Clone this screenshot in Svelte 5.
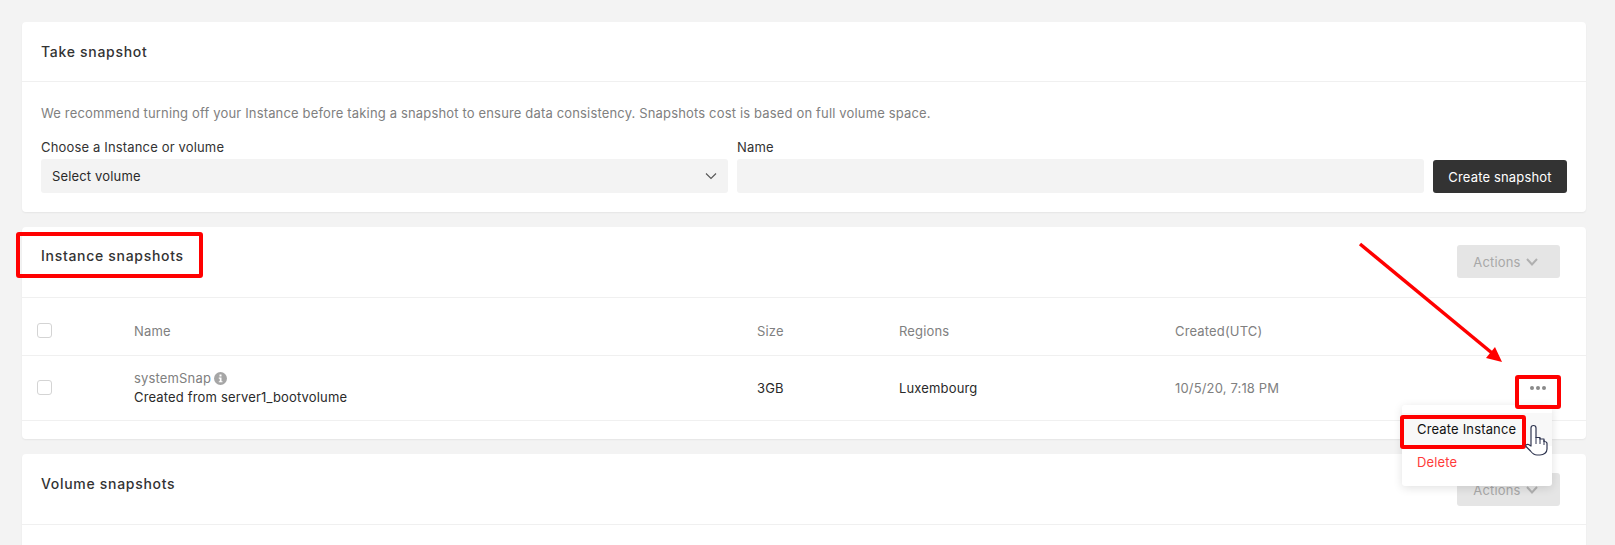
<script>
    const columns = ['Name', 'Size', 'Regions', 'Created(UTC)'];
</script>

<style>
    :global(body) {
        background: #f3f3f3;
    }

    .page {
        position: relative;
        height: 545px;
        overflow: hidden;
        padding: 22px 29px 0 22px;
        box-sizing: border-box;
        font-family: Inter, "Liberation Sans", sans-serif;
        font-size: 13px;
        letter-spacing: 0.16px;
        color: #2a2a2a;
    }

    .card {
        background: #fff;
        border-radius: 4px;
        box-shadow: 0 1px 2px rgba(0, 0, 0, 0.06);
        margin-bottom: 15px;
    }

    .card-head {
        display: flex;
        align-items: flex-start;
        justify-content: space-between;
        border-bottom: 1px solid #f0f0f0;
        padding: 18px 26px 0 19px;
        height: 52px;
    }

    .card-head.short {
        align-items: center;
        padding-top: 0;
        height: 59px;
    }

    .card-head.volume {
        padding-top: 19px;
        height: 51px;
    }

    h2 {
        margin: 0;
        font-size: 14px;
        line-height: 20px;
        font-weight: 500;
        letter-spacing: 0.7px;
        color: #333;
    }

    .card-head:not(.short) h2 {
        margin-top: 1px;
    }

    .actions {
        width: 103px;
        height: 33px;
        border: 0;
        border-radius: 3px;
        background: #e5e5e5;
        color: #a8a8a8;
        font: inherit;
        letter-spacing: inherit;
        display: flex;
        align-items: center;
        justify-content: center;
        gap: 5px;
        padding: 0 6px 0 0;
    }

    .snapshot-form {
        padding: 23px 19px 19px;
    }

    .hint {
        margin: 0 0 18px;
        line-height: 16px;
        color: #808080;
    }

    .fields {
        display: grid;
        grid-template-columns: 687px 687px 134px;
        column-gap: 9px;
        align-items: end;
    }

    label {
        display: block;
        line-height: 16px;
        margin-bottom: 4px;
        color: #333;
    }

    .select,
    .text-input {
        height: 34px;
        background: #f3f3f3;
        border-radius: 3px;
    }

    .select {
        display: flex;
        align-items: center;
        justify-content: space-between;
        padding: 0 11px;
    }

    .create {
        height: 33px;
        border: 0;
        border-radius: 3px;
        background: #333;
        color: #fff;
        font: inherit;
        letter-spacing: inherit;
        padding: 0;
    }

    .row {
        display: grid;
        grid-template-columns: 112px 623px 142px 276px 1fr;
        align-items: center;
        border-bottom: 1px solid #f0f0f0;
    }

    .row.top {
        height: 49px;
        padding-top: 8px;
        color: #808080;
    }

    .row.item {
        height: 64px;
    }

    .check {
        width: 13px;
        height: 13px;
        margin-left: 15px;
        border: 1px solid #d4d4d4;
        border-radius: 3px;
    }

    .row.item .check {
        margin-top: -1px;
    }

    .snap-name {
        display: flex;
        align-items: center;
        gap: 3px;
        line-height: 18px;
        color: #808080;
        margin-top: -1px;
    }

    .snap-from {
        line-height: 18px;
        margin-top: 1px;
    }

    .date {
        color: #808080;
    }

    .row-end {
        height: 18px;
    }

    .row-end.tall {
        height: 60px;
    }

    .dots {
        position: absolute;
        left: 1530px;
        top: 386px;
        display: flex;
        gap: 2px;
    }

    .dots span {
        width: 4px;
        height: 4px;
        border-radius: 50%;
        background: #8a8a8a;
    }

    .menu {
        position: absolute;
        left: 1402px;
        top: 405px;
        width: 150px;
        height: 81px;
        padding-top: 8px;
        box-sizing: border-box;
        background: #fff;
        border-radius: 3px;
        box-shadow: 0 2px 10px rgba(0, 0, 0, 0.12);
    }

    .menu div {
        height: 33px;
        line-height: 33px;
        padding-left: 15px;
    }

    .menu .hover {
        background: #f8f8f8;
        color: #111;
    }

    .menu .danger {
        color: #ff3b3b;
    }

    .overlay {
        position: absolute;
        left: 0;
        top: 0;
    }
</style>

<div class="page">
    <section class="card">
        <div class="card-head short"><h2>Take snapshot</h2></div>
        <div class="snapshot-form">
            <p class="hint">We recommend turning off your Instance before taking a snapshot to ensure data consistency. Snapshots cost is based on full volume space.</p>
            <div class="fields">
                <div>
                    <label for="volume">Choose a Instance or volume</label>
                    <div class="select" id="volume">
                        Select volume
                        <svg width="12" height="8" viewBox="0 0 12 8"><path d="M1 1.5l5 5 5-5" fill="none" stroke="#555" stroke-width="1.1"/></svg>
                    </div>
                </div>
                <div>
                    <label for="snapname">Name</label>
                    <div class="text-input" id="snapname"></div>
                </div>
                <button class="create">Create snapshot</button>
            </div>
        </div>
    </section>

    <section class="card">
        <div class="card-head">
            <h2>Instance snapshots</h2>
            <button class="actions">Actions
                <svg width="12" height="8" viewBox="0 0 12 8"><path d="M1 1l5 5.5L11 1" fill="none" stroke="#b0b0b0" stroke-width="2"/></svg>
            </button>
        </div>
        <div class="row top">
            <div class="check"></div>
            {#each columns as col}
                <div>{col}</div>
            {/each}
        </div>
        <div class="row item">
            <div class="check"></div>
            <div>
                <div class="snap-name">systemSnap
                    <svg width="13" height="13" viewBox="0 0 13 13"><circle cx="6.5" cy="6.5" r="6.5" fill="#a6a6a6"/><rect x="5.5" y="2.5" width="2" height="2" fill="#fff"/><path d="M4.8 5.6h2.7v3.6h1v1.1h-3.7V9.2h1V6.7h-1z" fill="#fff"/></svg>
                </div>
                <div class="snap-from">Created from server1_bootvolume</div>
            </div>
            <div>3GB</div>
            <div>Luxembourg</div>
            <div class="date">10/5/20, 7:18 PM</div>
        </div>
        <div class="row-end"></div>
    </section>

    <section class="card">
        <div class="card-head volume">
            <h2>Volume snapshots</h2>
            <button class="actions">Actions
                <svg width="12" height="8" viewBox="0 0 12 8"><path d="M1 1l5 5.5L11 1" fill="none" stroke="#b0b0b0" stroke-width="2"/></svg>
            </button>
        </div>
        <div class="row-end tall"></div>
    </section>

    <div class="dots"><span></span><span></span><span></span></div>

    <div class="menu">
        <div class="hover">Create Instance</div>
        <div class="danger">Delete</div>
    </div>

    <svg class="overlay" width="1615" height="545" viewBox="0 0 1615 545">
        <g fill="none" stroke="#ff0000" stroke-width="4">
            <rect x="18" y="234" width="183" height="42" rx="1"/>
            <rect x="1517" y="377" width="42" height="30" rx="1"/>
            <rect x="1402" y="417" width="122" height="30" rx="1"/>
        </g>
        <path d="M1360 244L1492 353" stroke="#ff0000" stroke-width="3.5" fill="none"/>
        <path d="M1502 362L1486 358L1495 347Z" fill="#ff0000"/>
        <path d="M1531 428a2.5 2.5 0 0 1 5 0V437.5h4V439h4v2.5c2 0 3 .5 3 2V449c0 3.500-3 6-7 6h-3c-3 0-5-2-6.500-4l-4.500-4.500c-1-1.500 1-2.500 2.500-2l2.500 1.500z" fill="#fff" stroke="#2f3550" stroke-width="1.2" stroke-linejoin="round"/>
        <path d="M1536 437v7M1540 438v6M1544 440v5" stroke="#2f3550" stroke-width="1" fill="none"/>
    </svg>
</div>
